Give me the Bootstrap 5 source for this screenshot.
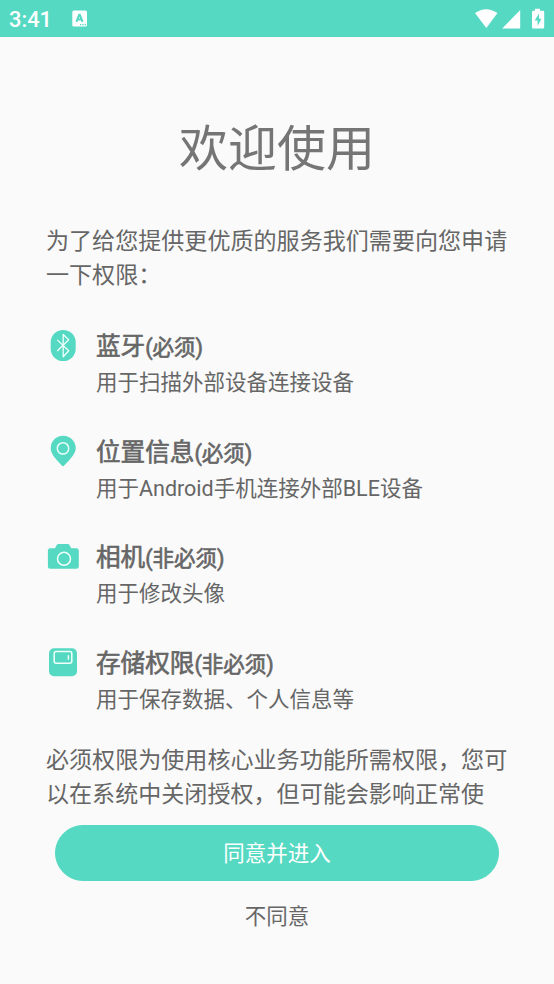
<!DOCTYPE html>
<html lang="zh-CN">
<head>
<meta charset="utf-8">
<meta name="viewport" content="width=device-width, initial-scale=1">
<title>欢迎使用</title>
<link href="https://cdn.jsdelivr.net/npm/bootstrap@5.3.0/dist/css/bootstrap.min.css" rel="stylesheet">
<style>
  body { font-family: Roboto, "Noto Sans CJK SC", sans-serif; background: #fafafa; color: #666; height: 984px; overflow: hidden; }
  .status { height: 37px; background: #55d9c2; padding: 0 9px; }
  .clock { font-size: 21.8px; font-weight: 500; line-height: 35px; padding-top: 2px; width: 63px; }
  .page { padding: 83px 46px 0; }
  .welcome { font-size: 49px; line-height: 60px; font-weight: 400; color: #757575; margin-bottom: 45px; }
  .copy { font-size: 23.07px; line-height: 34px; width: 464px; white-space: nowrap; }
  .perms { margin-top: 36px; gap: 33.6px; }
  .perm-icon { width: 50px; height: 36px; margin-top: -1px; }
  .perm-title { font-size: 24.6px; line-height: 36px; font-weight: 400; -webkit-text-stroke: .65px #666; }
  .perm-title span { font-size: 21.5px; line-height: 1; }
  .perm-desc { font-size: 21.5px; line-height: 35px; padding-bottom: 1px; }
  .closing { margin-top: 26px; }
  .agree { --bs-btn-color: #fff; --bs-btn-bg: #55d9c2; --bs-btn-border-color: #55d9c2; --bs-btn-hover-bg: #48c9b3; --bs-btn-hover-color: #fff; width: 444px; height: 56px; font-size: 21.5px; padding: 2px 0 0; margin-top: 13px; }
  .decline { --bs-btn-color: #666; font-size: 21.5px; line-height: 36px; margin-top: 18px; }
</style>
</head>
<body>
<header class="status d-flex align-items-center text-white">
  <span class="clock">3:41</span>
  <svg width="16" height="17" viewBox="0 0 16 17"><rect x=".3" y=".5" width="14.7" height="16" rx="1.6" fill="#fff"/><path d="M4.4 11.800 7.200 4.800H7.800L10.600 11.800M5.400 9.600h4.200" fill="none" stroke="#55d9c2" stroke-width="2"/><path d="M8 14.700h1.300M10.300 14.700h1.300M12.600 14.700h1.300" stroke="#55d9c2" stroke-width="1.200"/></svg>
  <svg class="ms-auto" width="72" height="22" viewBox="0 0 72 22"><path d="M2 5.100Q13-2.500 24.500 5.100L13.300 20Z" fill="#fff"/><path d="M47.200 2v18.500H29.200Z" fill="#fff"/><path d="M62 .7h5v2h3q1.200 0 1.200 1.200v15.400q0 1.200-1.200 1.200H60.200q-1.200 0-1.200-1.200V3.900q0-1.200 1.200-1.200h1.800Z" fill="#fff"/><path d="M66 5.500 61.700 12.500H64.600V18L68.400 10.800H66Z" fill="#55d9c2"/></svg>
</header>
<main class="page">
  <h1 class="welcome text-center">欢迎使用</h1>
  <p class="copy mb-0">为了给您提供更优质的服务我们需要向您申请<br>一下权限：</p>
  <section class="perms d-flex flex-column">
    <div class="d-flex">
      <svg class="perm-icon flex-shrink-0" viewBox="0 0 50 36"><rect x="4.700" y="2" width="25" height="31" rx="12.300" fill="#55d9c2"/><path d="m11.200 11.900 11.500 10.800-5.500 6V6.500l5.500 5.200L11.200 23" fill="none" stroke="#effffc" stroke-width="1.300" stroke-linejoin="round"/></svg>
      <div><h2 class="perm-title mb-0">蓝牙<span>(必须)</span></h2><p class="perm-desc mb-0">用于扫描外部设备连接设备</p></div>
    </div>
    <div class="d-flex">
      <svg class="perm-icon flex-shrink-0" viewBox="0 0 50 36"><path d="M17 1.700A12.300 12.300 0 0 0 4.700 14c0 4.500 2.800 8.500 6 11.900l5.100 5.600q1.200 1.300 2.400 0l5.200-5.600c3.200-3.400 6.300-7.400 6.300-11.900A12.500 12.300 0 0 0 17 1.700Z" fill="#55d9c2"/><circle cx="17" cy="14.400" r="5.700" fill="none" stroke="#e9fffb" stroke-width="1.500"/></svg>
      <div><h2 class="perm-title mb-0">位置信息<span>(必须)</span></h2><p class="perm-desc mb-0">用于Android手机连接外部BLE设备</p></div>
    </div>
    <div class="d-flex">
      <svg class="perm-icon flex-shrink-0" viewBox="0 -1 50 36"><path d="M9 8.300 10.900 4.800Q11.300 4 12.300 4h9.600q1 0 1.400.8l1.900 3.500h5.100q2.500 0 2.500 2.500v15.500q0 2.500-2.500 2.500H4.400q-2.500 0-2.500-2.500V10.800q0-2.500 2.500-2.500Z" fill="#55d9c2"/><circle cx="18" cy="18.800" r="6.500" fill="none" stroke="#effffc" stroke-width="1.500"/></svg>
      <div><h2 class="perm-title mb-0">相机<span>(非必须)</span></h2><p class="perm-desc mb-0">用于修改头像</p></div>
    </div>
    <div class="d-flex">
      <svg class="perm-icon flex-shrink-0" viewBox="0 0 50 36"><rect x="3" y="3.200" width="28" height="28" rx="5" fill="#55d9c2"/><rect x="8.200" y="6.600" width="17.600" height="11.600" rx="2" fill="none" stroke="#effffc" stroke-width="1.500"/><path d="M22.400 10.200v4.500" stroke="#effffc" stroke-width="1.500"/></svg>
      <div><h2 class="perm-title mb-0">存储权限<span>(非必须)</span></h2><p class="perm-desc mb-0">用于保存数据、个人信息等</p></div>
    </div>
  </section>
  <p class="copy closing mb-0">必须权限为使用核心业务功能所需权限，您可<br>以在系统中关闭授权，但可能会影响正常使</p>
  <div class="d-flex flex-column align-items-center">
    <button type="button" class="btn agree rounded-pill">同意并进入</button>
    <button type="button" class="btn decline border-0 p-0">不同意</button>
  </div>
</main>
<script src="https://cdn.jsdelivr.net/npm/bootstrap@5.3.0/dist/js/bootstrap.bundle.min.js"></script>
</body>
</html>
